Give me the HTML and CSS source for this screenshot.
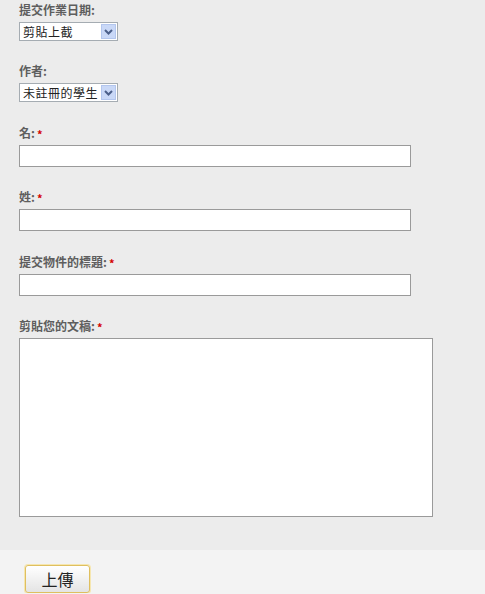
FILE: index.html
```html
<!DOCTYPE html>
<html lang="zh-Hant">
<head>
<meta charset="utf-8">
<title>上傳</title>
<link rel="stylesheet" href="styles.css">
</head>
<body>
<form class="form">
  <div class="fields">
    <div class="group">
      <label class="label">提交作業日期:</label>
      <span class="select-wrap">
        <select class="select"><option>剪貼上截</option></select>
        <svg class="arrow" width="15" height="15" viewBox="0 0 15 15"><rect x="0.5" y="0.5" width="14" height="14" fill="#c9d8f7" stroke="#b3c6ee"/><path d="M4 6 L7.5 9.5 L11 6" fill="none" stroke="#4b5f8a" stroke-width="2"/></svg>
      </span>
    </div>
    <div class="group group-select">
      <label class="label">作者:</label>
      <span class="select-wrap">
        <select class="select"><option>未註冊的學生</option></select>
        <svg class="arrow" width="15" height="15" viewBox="0 0 15 15"><rect x="0.5" y="0.5" width="14" height="14" fill="#c9d8f7" stroke="#b3c6ee"/><path d="M4 6 L7.5 9.5 L11 6" fill="none" stroke="#4b5f8a" stroke-width="2"/></svg>
      </span>
    </div>
    <div class="group">
      <label class="label">名:<span class="req">*</span></label>
      <input class="text" type="text">
    </div>
    <div class="group group-wide">
      <label class="label">姓:<span class="req">*</span></label>
      <input class="text" type="text">
    </div>
    <div class="group">
      <label class="label">提交物件的標題:<span class="req">*</span></label>
      <input class="text" type="text">
    </div>
    <div class="group last">
      <label class="label">剪貼您的文稿:<span class="req">*</span></label>
      <textarea class="area"></textarea>
    </div>
  </div>
  <div class="actions">
    <button type="button" class="btn">上傳</button>
  </div>
</form>
</body>
</html>
```
FILE: styles.css
```css
html, body {
  margin: 0;
  padding: 0;
  background: #f3f3f3;
}
.form {
  margin: 0;
  font-family: "Noto Sans CJK TC", "Liberation Sans", sans-serif;
}
.fields {
  background: #ececec;
  padding: 2px 0 33px 19px;
}
.group {
  display: flex;
  flex-direction: column;
  align-items: flex-start;
  margin-bottom: 22px;
}
.group-select,
.group-wide {
  margin-bottom: 23px;
}
.group.last {
  margin-bottom: 0;
}
.label {
  font-size: 12px;
  font-weight: bold;
  line-height: 16px;
  color: #5e5e5e;
  margin-bottom: 4px;
}
.req {
  color: #d40000;
  font-size: 11px;
  margin-left: 2px;
  position: relative;
  top: 1px;
}
.select-wrap {
  position: relative;
  display: block;
  width: 99px;
  height: 19px;
}
.select {
  appearance: none;
  -webkit-appearance: none;
  display: block;
  box-sizing: border-box;
  width: 99px;
  height: 19px;
  margin: 0;
  padding: 0 0 0 3px;
  border: 1px solid #a5acb2;
  background: #fff;
  font-family: "Noto Sans CJK TC", sans-serif;
  font-size: 12px;
  letter-spacing: 0.5px;
  line-height: 17px;
  color: #222;
}
.arrow {
  position: absolute;
  right: 2px;
  top: 2px;
  pointer-events: none;
}
.text {
  box-sizing: border-box;
  width: 392px;
  height: 22px;
  margin: 0;
  border: 1px solid #9a9a9a;
  background: #fff;
  padding: 0 2px;
}
.area {
  box-sizing: border-box;
  width: 414px;
  height: 179px;
  margin: 0;
  border: 1px solid #9a9a9a;
  background: #fff;
  resize: none;
  display: block;
}
.actions {
  padding: 15px 0 0 25px;
}
.btn {
  box-sizing: border-box;
  width: 65px;
  height: 28px;
  border: 1px solid #dfbf5f;
  border-radius: 3px;
  background: linear-gradient(#ffffff, #e4e4e4);
  box-shadow: 0 0 0 1px #f5e6b0;
  font-family: "Noto Sans CJK TC", sans-serif;
  font-size: 16px;
  color: #222;
  padding: 0;
  line-height: 26px;
}
```
